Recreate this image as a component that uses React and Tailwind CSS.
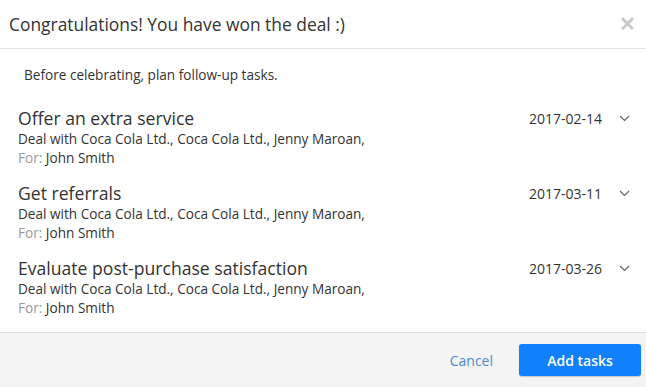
const TASKS = [
  { title: "Offer an extra service", date: "2017-02-14" },
  { title: "Get referrals", date: "2017-03-11" },
  { title: "Evaluate post-purchase satisfaction", date: "2017-03-26" },
];

const TaskRow = ({ title, date }) => (
  <div className="flex items-start justify-between h-[75px]">
    <div className="flex flex-col">
      <span className="text-[17.6px] leading-[22px] text-[#333]">{title}</span>
      <span className="text-[13.6px] leading-[19px] text-[#333]">
        Deal with Coca Cola Ltd., Coca Cola Ltd., Jenny Maroan,
      </span>
      <span className="text-[13.6px] leading-[19px] text-[#333]">
        <span className="text-[#999]">For:</span> John Smith
      </span>
    </div>
    <div className="flex items-center gap-[17px] h-[22px] pr-[16px]">
      <span className="text-[14px] text-[#333]">{date}</span>
      <svg width="11" height="7" viewBox="0 0 11 7" fill="none" stroke="#666" strokeWidth="1.2">
        <polyline points="1,1 5.5,5.5 10,1" />
      </svg>
    </div>
  </div>
);

export default function App() {
  return (
    <div className="w-[646px] h-[387px] bg-white flex flex-col font-['Open_Sans',sans-serif]">
      {/* Header */}
      <div className="h-[49px] flex items-center justify-between pl-[9px] pr-[10px] border-b border-[#e5e5e5]">
        <span className="text-[17.4px] text-[#333]">Congratulations! You have won the deal :)</span>
        <span className="text-[#c8c8c8] text-[20px] font-bold leading-none">✕</span>
      </div>

      {/* Body */}
      <div className="flex-1 flex flex-col pl-[18px]">
        <p className="pl-[6px] pt-[16px] text-[13.6px] text-[#333]">Before celebrating, plan follow-up tasks.</p>
        <div className="flex flex-col pt-[22px]">
          {TASKS.map((t) => (
            <TaskRow key={t.title} {...t} />
          ))}
        </div>
      </div>

      {/* Footer */}
      <div className="h-[55px] bg-[#f4f4f4] border-t border-[#e2e2e2] flex items-center justify-end gap-[26px] pr-[5px]">
        <button className="text-[14px] text-[#4a8ccc]">Cancel</button>
        <button className="w-[122px] h-[32px] rounded-[3px] bg-[#1181fb] text-white text-[14px] font-semibold shadow-[0_1px_1px_rgba(0,0,0,0.2)]">
          Add tasks
        </button>
      </div>
    </div>
  );
}
